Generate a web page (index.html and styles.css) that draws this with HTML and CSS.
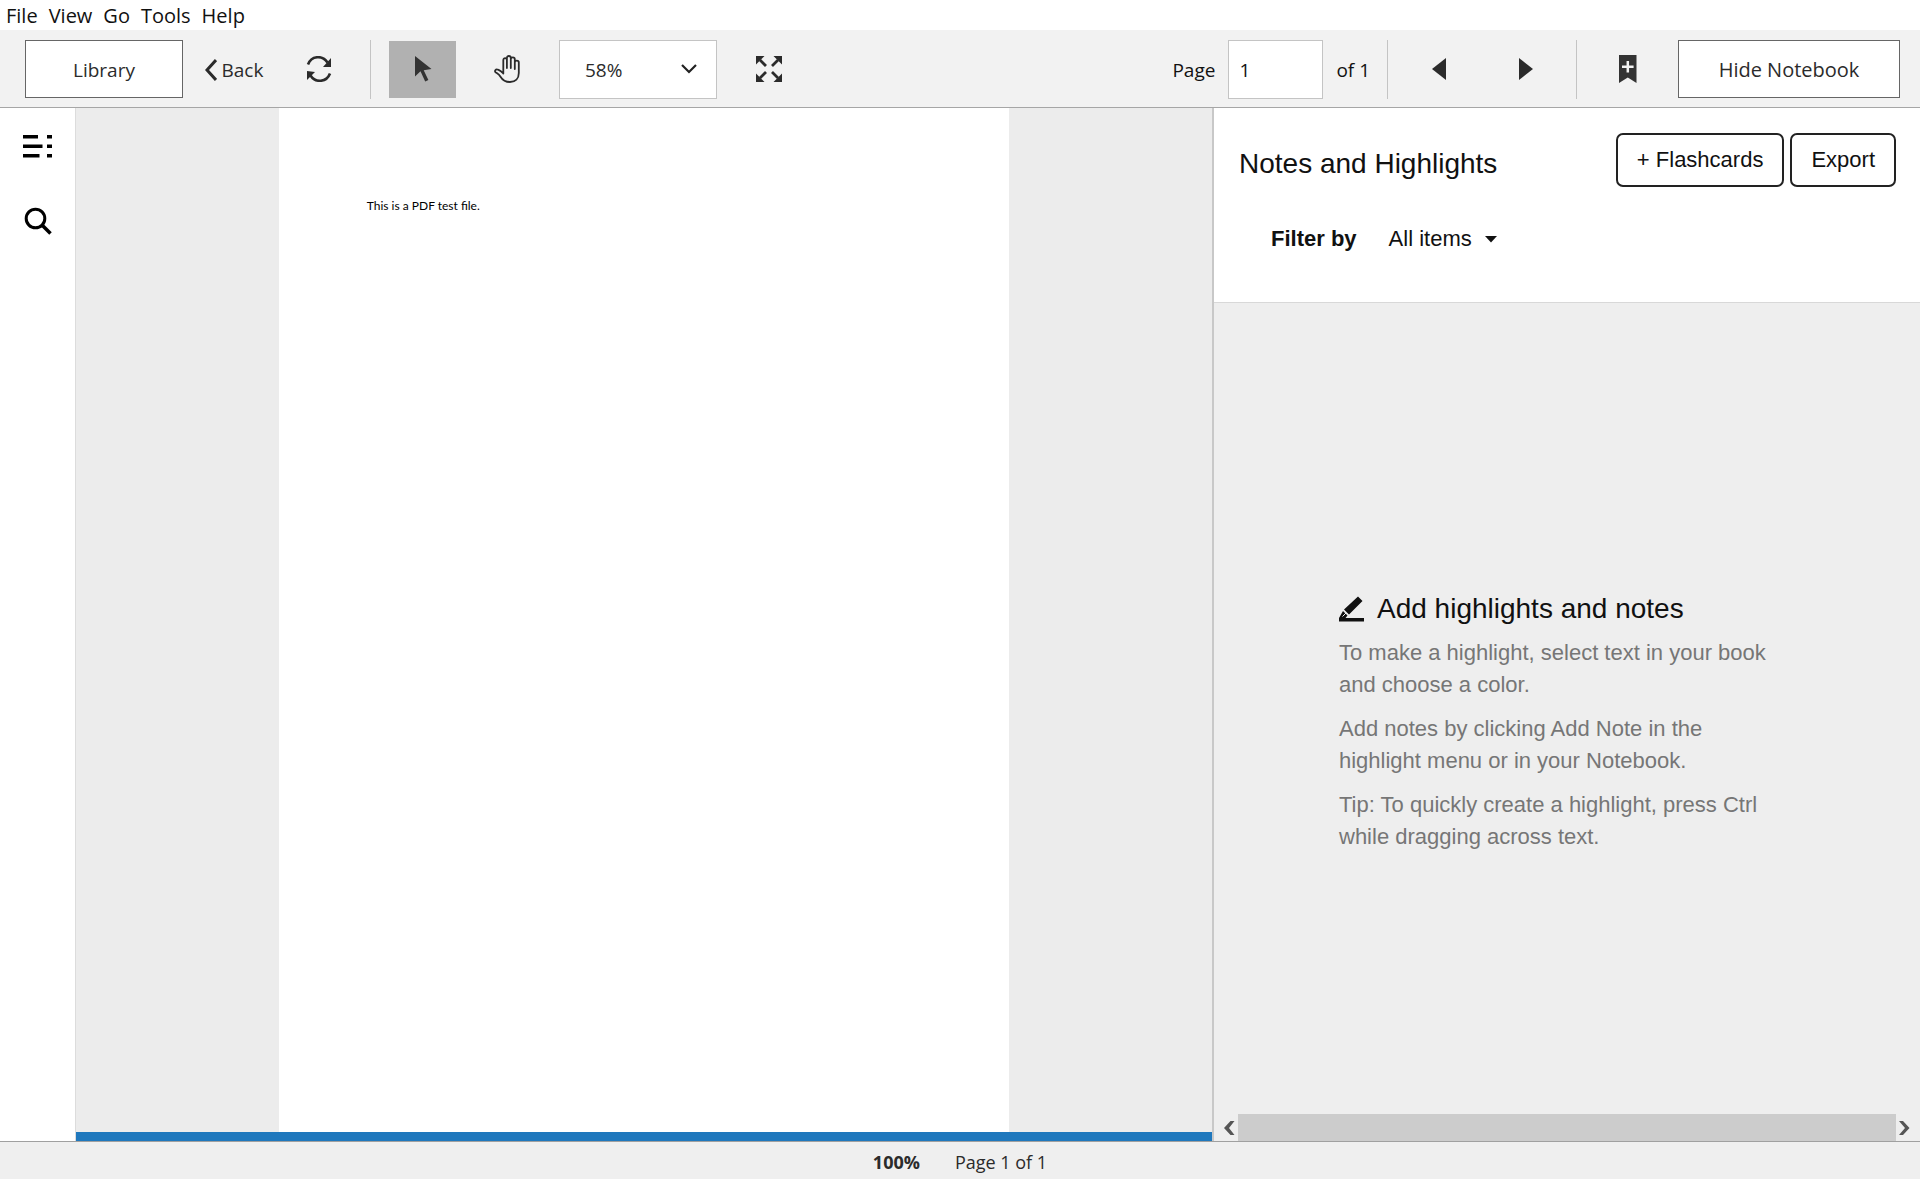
FILE: index.html
```html
<!DOCTYPE html>
<html lang="en">
<head>
<meta charset="utf-8">
<title>Bookshelf Reader</title>
<link rel="stylesheet" href="styles.css">
</head>
<body>
<div class="app">
  <nav class="menubar" aria-label="Application menu">
    <button class="menu-item" type="button">File</button>
    <button class="menu-item" type="button">View</button>
    <button class="menu-item" type="button">Go</button>
    <button class="menu-item" type="button">Tools</button>
    <button class="menu-item" type="button">Help</button>
  </nav>

  <header class="toolbar">
    <div class="tool-group">
      <button class="box-button library" type="button">Library</button>
      <button class="back" type="button">
        <svg width="12" height="22" viewBox="0 0 12 22" fill="none" stroke="#2b2b2b" stroke-width="3"><path d="M11 1 2 11l9 10"/></svg>
        <span>Back</span>
      </button>
      <button class="tool" type="button" aria-label="Refresh">
        <svg width="26" height="26" viewBox="0 0 26 26" fill="none" stroke="#2b2b2b" stroke-width="2.6"><path d="M2 8.500C5.500 -.5 16.500-1.200 21.500 6.500M24 17.500C20.500 26.500 9.500 27.200 4.500 19.500"/><path d="M25 2v9h-8zM1 24v-9l8 1z" fill="#2b2b2b" stroke="none"/></svg>
      </button>
      <span class="separator"></span>
      <button class="tool tool-active" type="button" aria-label="Select" aria-pressed="true">
        <svg width="18" height="26" viewBox="0 0 18 26"><path d="M1 0v20.500l5.500-5.300 4.700 10.300 3.200-1.400-4.700-9.800L17.500 13z" fill="#333"/></svg>
      </button>
      <button class="tool" type="button" aria-label="Pan">
        <svg width="28" height="28" viewBox="0 0 28 28" fill="none" stroke="#2b2b2b" stroke-width="1.800" stroke-linecap="round" stroke-linejoin="round"><path d="M9.300 18.500V5.200c0-2.700 3.600-2.700 3.600 0V13M12.900 5V3c0-2.700 3.900-2.700 3.900 0v10M16.800 4.200c0-2.500 4-2.500 4 0V14M20.800 7.500c0-2.400 4-2.400 4 0V18c0 5.500-3.500 9-8.800 9-5 0-7.500-2-9.500-5.300-1.200-2-2.800-3-4.300-4-2.600-1.600-.4-4.100 1.900-3 2.300 1 3.700 2.100 5.200 3.800"/></svg>
      </button>
      <div class="zoom">
        <select class="zoom-select" aria-label="Zoom level"><option>58%</option></select>
        <svg class="zoom-arrow" width="16" height="10" viewBox="0 0 16 10" fill="none" stroke="#222" stroke-width="2.200"><path d="m1 1 7 7 7-7"/></svg>
      </div>
      <button class="tool" type="button" aria-label="Fit to window">
        <svg width="26" height="26" viewBox="0 0 26 26" fill="#2b2b2b" stroke="#2b2b2b"><path d="m4 4 6 6M22 4l-6 6M4 22l6-6M22 22l-6-6" stroke-width="2.800"/><path d="M0 0h8.500L0 8.500zM26 0v8.500L17.500 0zM0 26v-8.500L8.500 26zM26 26h-8.500l8.500-8.500z" stroke="none"/></svg>
      </button>
    </div>

    <div class="tool-group tool-group-end">
      <div class="pager">
        <label for="page-number">Page</label>
        <input class="page-input" id="page-number" type="text" value="1">
        <span>of 1</span>
      </div>
      <span class="separator"></span>
      <div class="arrows">
        <button class="tool" type="button" aria-label="Previous page">
          <svg width="14" height="22" viewBox="0 0 14 22"><path d="M14 0v22L0 11z" fill="#2b2b2b"/></svg>
        </button>
        <button class="tool" type="button" aria-label="Next page">
          <svg width="14" height="22" viewBox="0 0 14 22"><path d="M0 0v22l14-11z" fill="#2b2b2b"/></svg>
        </button>
      </div>
      <span class="separator"></span>
      <button class="tool" type="button" aria-label="Add bookmark">
        <svg width="18" height="28" viewBox="0 0 18 28"><path d="M0 0h17.500v28L8.800 22.500 0 28z" fill="#333"/><path d="M8.800 6v11.500M3 11.700h11.600" stroke="#f2f2f2" stroke-width="2.500"/></svg>
      </button>
      <button class="box-button hide-notebook" type="button">Hide Notebook</button>
    </div>
  </header>

  <main class="workspace">
    <aside class="rail">
      <button class="rail-button" type="button" aria-label="Table of contents">
        <svg width="29" height="24" viewBox="0 0 29 24" fill="#000"><path d="M0 1h15v3.500H0zM24 1h5v3.500h-5zM0 10.500h19.500V14H0zM24 10.500h5V14h-5zM0 20h16.500v3.500H0zM24 20h5v3.500h-5z"/></svg>
      </button>
      <button class="rail-button" type="button" aria-label="Search">
        <svg width="28" height="28" viewBox="0 0 28 28" fill="none" stroke="#000"><circle cx="11.500" cy="11.500" r="9.300" stroke-width="3"/><path d="m18 18 8.500 8.500" stroke-width="3.600"/></svg>
      </button>
    </aside>

    <section class="viewer" aria-label="Document">
      <div class="canvas">
        <article class="sheet"><p class="sheet-text">This is a PDF test file.</p></article>
      </div>
      <div class="progress"></div>
    </section>

    <section class="notebook" aria-label="Notebook">
      <div class="notebook-header">
        <div class="notebook-top">
          <h1 class="notebook-title">Notes and Highlights</h1>
          <div class="notebook-actions">
            <button class="outline-button" type="button">+ Flashcards</button>
            <button class="outline-button" type="button">Export</button>
          </div>
        </div>
        <div class="filter">
          <span class="filter-label" id="filter-label">Filter by</span>
          <button class="filter-button" type="button" aria-describedby="filter-label">
            <span>All items</span>
            <svg width="12" height="7" viewBox="0 0 12 7"><path d="M0 0h12L6 6.500z" fill="#111"/></svg>
          </button>
        </div>
      </div>
      <div class="empty">
        <h2 class="empty-title">
          <svg width="26" height="26" viewBox="0 0 26 26" fill="#111"><path d="M19 .5 23.500 5 10 18.500 5 13.500zM4 15l4.500 4.500L6.500 22H25v3.500H0V22z"/><path d="M3.500 20.500 7 17" stroke="#eee" stroke-width="1"/></svg>
          <span>Add highlights and notes</span>
        </h2>
        <p class="empty-text">To make a highlight, select text in your book and choose a color.</p>
        <p class="empty-text">Add notes by clicking Add Note in the highlight menu or in your Notebook.</p>
        <p class="empty-text">Tip: To quickly create a highlight, press Ctrl while dragging across text.</p>
      </div>
      <div class="scrollbar">
        <button class="scroll-button scroll-left" type="button" aria-label="Scroll left">
          <svg width="11" height="14" viewBox="0 0 11 14" fill="#555"><path d="M6.500 0h4L5 7l5.500 7h-4L0 7z"/></svg>
        </button>
        <div class="scroll-thumb"></div>
        <button class="scroll-button scroll-right" type="button" aria-label="Scroll right">
          <svg width="11" height="14" viewBox="0 0 11 14" fill="#555"><path d="M4 0H0l6 7-6 7h4l6.500-7z"/></svg>
        </button>
      </div>
    </section>
  </main>

  <footer class="statusbar">
    <strong>100%</strong>
    <span>Page 1 of 1</span>
  </footer>
</div>
</body>
</html>
```
FILE: styles.css
```css
* {
  box-sizing: border-box;
}

body {
  margin: 0;
  color: #111;
  background: #fff;
  font: 19px/24px "Open Sans", "Noto Sans", sans-serif;
}

button {
  display: flex;
  align-items: center;
  justify-content: center;
  padding: 0;
  border: 0;
  color: inherit;
  background: none;
  font: inherit;
  white-space: nowrap;
}

svg {
  display: block;
  flex: none;
}

.app {
  display: flex;
  flex-direction: column;
  min-height: 100vh;
}

/* Menu and toolbar */

.menubar {
  display: flex;
  gap: 11px;
  height: 30px;
  padding: 2px 6px 0;
  font-size: 20px;
}

.toolbar {
  display: flex;
  align-items: center;
  justify-content: space-between;
  height: 78px;
  padding: 1px 20px 0 25px;
  border-bottom: 1px solid #a6a6a6;
  background: #f2f2f2;
}

.tool-group {
  display: flex;
  align-items: center;
  gap: 18px;
}

.tool-group-end {
  gap: 17px;
}

.box-button {
  height: 58px;
  padding-top: 2px;
  border: 1px solid #666;
  color: #2b2b2b;
  background: #fff;
}

.library {
  width: 158px;
}

.hide-notebook {
  width: 222px;
  font-size: 20px;
}

.back {
  gap: 5px;
  width: 66px;
  padding-top: 2px;
  color: #2b2b2b;
}

.tool {
  width: 67px;
  height: 57px;
}

.tool-active {
  background: #b1b1b1;
}

.separator {
  width: 1px;
  height: 59px;
  background: #c4c4c4;
}

.zoom {
  display: grid;
  grid-template-columns: 158px;
  align-items: center;
}

.zoom-select {
  grid-area: 1 / 1;
  height: 59px;
  padding: 2px 25px 0;
  border: 1px solid #c4c4c4;
  border-radius: 0;
  color: #2b2b2b;
  background: #fff;
  font: inherit;
  appearance: none;
}

.zoom-arrow {
  grid-area: 1 / 1;
  justify-self: end;
  margin-right: 20px;
  pointer-events: none;
}

.pager {
  display: flex;
  align-items: center;
  gap: 13px;
  line-height: 26px;
}

.pager label,
.pager span {
  padding-top: 2px;
}

.page-input {
  width: 95px;
  height: 59px;
  padding: 2px 10px 0;
  border: 1px solid #c4c4c4;
  color: #111;
  background: #fff;
  font: inherit;
}

.arrows {
  display: flex;
  gap: 20px;
}

/* Workspace */

.workspace {
  display: grid;
  flex: 1;
  grid-template-columns: 76px minmax(0, 1136fr) minmax(0, 708fr);
}

.rail {
  display: flex;
  flex-direction: column;
  border-right: 1px solid #dcdcdc;
  background: #fff;
}

.rail-button {
  height: 75px;
}

.viewer {
  display: flex;
  flex-direction: column;
}

.canvas {
  display: flex;
  flex: 1;
  justify-content: center;
  background: #ececec;
}

.sheet {
  width: 64.3%;
  padding: 86px 88px;
  background: #fff;
}

.sheet-text {
  margin: 0;
  color: #000;
  font: 12px/24px Lato, sans-serif;
}

.progress {
  height: 9px;
  background: #1f78bd;
}

/* Notebook */

.notebook {
  display: flex;
  flex-direction: column;
  border-left: 2px solid #c8c8c8;
  background: #eee;
  font: 22px/32px "Liberation Sans", Arial, sans-serif;
}

.notebook-header {
  height: 195px;
  padding: 25px 24px 0 25px;
  border-bottom: 1px solid #d8d8d8;
  background: #fff;
}

.notebook-top {
  display: flex;
  justify-content: space-between;
}

.notebook-title,
.empty-title {
  margin: 0;
  font-size: 28px;
  font-weight: 400;
}

.notebook-title {
  padding-top: 15px;
}

.notebook-actions {
  display: flex;
  gap: 6px;
}

.outline-button {
  height: 54px;
  padding: 0 19px;
  border: 2px solid #222;
  border-radius: 7px;
}

.filter {
  display: flex;
  gap: 32px;
  padding: 36px 32px 0;
}

.filter-label {
  font-weight: 700;
}

.filter-button {
  gap: 13px;
}

.empty {
  display: flex;
  flex: 1;
  flex-direction: column;
  justify-content: center;
  gap: 12px;
  padding: 28px 125px 0;
}

.empty-title {
  display: flex;
  align-items: center;
  gap: 12px;
  white-space: nowrap;
}

.empty-text {
  max-width: 440px;
  margin: 0;
  color: #767676;
}

.scrollbar {
  display: flex;
  height: 27px;
}

.scroll-button {
  width: 24px;
  padding: 0 3px;
}

.scroll-left {
  justify-content: flex-end;
}

.scroll-right {
  justify-content: flex-start;
}

.scroll-thumb {
  flex: 1;
  background: #ccc;
}

/* Status bar */

.statusbar {
  display: flex;
  justify-content: center;
  gap: 35px;
  height: 38px;
  padding-top: 8px;
  border-top: 1px solid #a0a0a0;
  color: #2b2b2b;
  background: #efefef;
  font-size: 18px;
}
```
